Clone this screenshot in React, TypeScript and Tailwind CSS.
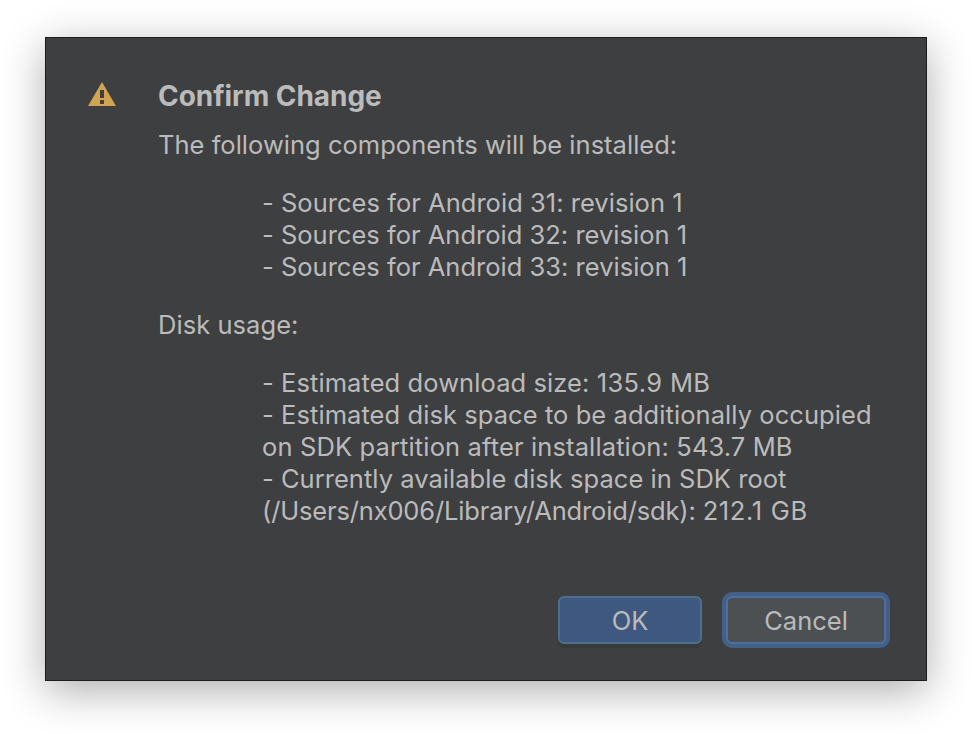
const sources = [
  { text: '- Sources for Android 31: revision 1', cls: 'tracking-[0.03px]' },
  { text: '- Sources for Android 32: revision 1', cls: 'tracking-[0.01px]' },
  { text: '- Sources for Android 33: revision 1', cls: 'tracking-[0.01px]' },
];

const usage = [
  { text: '- Estimated download size: ', cls: 'tracking-[0.08px]', value: '135.9 MB', valueCls: 'tracking-[0.35px]' },
  { text: '- Estimated disk space to be additionally occupied', cls: 'tracking-[0.07px]' },
  { text: 'on SDK partition after installation: ', cls: 'tracking-[0.13px]', value: '543.7 MB', valueCls: 'tracking-[0.1px]' },
  { text: '- Currently available disk space in SDK root', cls: 'tracking-[0.03px]' },
  { text: '(/Users/nx006/Library/Android/sdk): ', cls: 'tracking-[-0.16px]', value: '212.1 GB', valueCls: 'tracking-[0.65px]' },
];

function WarningIcon() {
  return (
    <svg className="mt-[44px] ml-[42px] h-6 w-7 shrink-0" viewBox="0 0 28 24">
      <path d="M14 0 28 24H0Z" fill="#d2a452" />
      <path d="M12 8h4v8h-4ZM12 18h4v4h-4Z" fill="#3e3f41" />
    </svg>
  );
}

export default function App() {
  return (
    <div className="h-[734px] w-[972px] overflow-hidden bg-white pt-[37px] pl-[45px] font-['Inter',sans-serif] text-[25.5px] leading-8 text-[#bbbbbb] [font-feature-settings:'calt'_0]">
      <main className="flex h-[644px] w-[882px] flex-col border border-[#1c1c1d] bg-[#3e3f41] shadow-[0_10px_40px_rgba(0,0,0,0.32)]">
        <div className="flex h-[558px]">
          <WarningIcon />
          <div className="ml-[42px] whitespace-nowrap pt-[42px]">
            <h1 className="text-[28px] leading-8 font-bold tracking-[-0.04px]">Confirm Change</h1>
            <p className="mt-[17px] tracking-[0.02px]">The following components will be installed:</p>
            <ul className="mt-[26px] ml-[104px]">
              {sources.map((s) => (
                <li key={s.text} className={s.cls}>{s.text}</li>
              ))}
            </ul>
            <p className="mt-[26px] tracking-[0.05px]">Disk usage:</p>
            <ul className="mt-[26px] ml-[104px]">
              {usage.map((s) => (
                <li key={s.text} className={s.cls}>
                  {s.text}
                  {s.value && <span className={s.valueCls}>{s.value}</span>}
                </li>
              ))}
            </ul>
          </div>
        </div>
        <div className="flex items-start gap-6 pl-[512px]">
          <button className="h-12 w-36 rounded-[6px] border-2 border-[#4c708c] bg-[#3f587f] pt-[2px] shadow-[0_4px_0_#38393b]">OK</button>
          <button className="h-12 w-40 rounded-[6px] border-2 border-[#4c6f9e] bg-[#4c5052] pt-[2px] shadow-[0_0_0_4px_#436089]">Cancel</button>
        </div>
      </main>
    </div>
  );
}
